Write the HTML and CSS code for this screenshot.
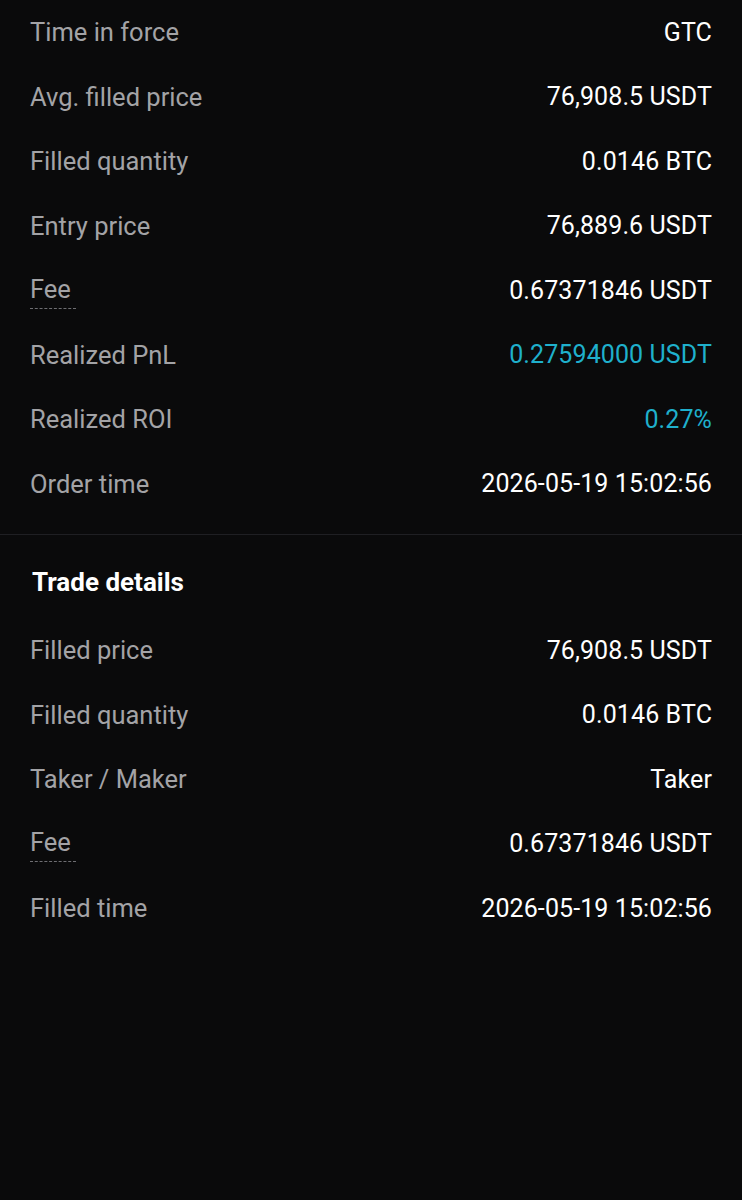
FILE: index.html
```html
<!DOCTYPE html>
<html lang="en">
  <head>
    <meta charset="UTF-8" />
    <meta name="viewport" content="width=device-width, initial-scale=1.0" />
    <title>Order details</title>
    <link rel="stylesheet" href="styles.css">
  </head>
  <body>
    <div class="section">
      <div class="row"><span class="label">Time in force</span><span class="value">GTC</span></div>
      <div class="row"><span class="label">Avg. filled price</span><span class="value">76,908.5 USDT</span></div>
      <div class="row"><span class="label">Filled quantity</span><span class="value">0.0146 BTC</span></div>
      <div class="row"><span class="label">Entry price</span><span class="value">76,889.6 USDT</span></div>
      <div class="row"><span class="label tip">Fee</span><span class="value">0.67371846 USDT</span></div>
      <div class="row"><span class="label">Realized PnL</span><span class="value up">0.27594000 USDT</span></div>
      <div class="row"><span class="label">Realized ROI</span><span class="value up">0.27%</span></div>
      <div class="row"><span class="label">Order time</span><span class="value">2026-05-19 15:02:56</span></div>
    </div>

    <div class="divider"></div>

    <div class="section">
      <h2 class="title">Trade details</h2>
      <div class="row"><span class="label">Filled price</span><span class="value">76,908.5 USDT</span></div>
      <div class="row"><span class="label">Filled quantity</span><span class="value">0.0146 BTC</span></div>
      <div class="row"><span class="label">Taker / Maker</span><span class="value">Taker</span></div>
      <div class="row"><span class="label tip">Fee</span><span class="value">0.67371846 USDT</span></div>
      <div class="row"><span class="label">Filled time</span><span class="value">2026-05-19 15:02:56</span></div>
    </div>
  </body>
</html>
```

FILE: styles.css
```css
body {
  margin: 0;
  padding: 0;
  background-color: #0a0a0b;
  font-family: Roboto, "Liberation Sans", sans-serif;
  color: #fff;
  height: 1200px;
}
.section {
  padding: 0 30px;
}
.row {
  display: flex;
  justify-content: space-between;
  align-items: center;
  height: 64.5px;
}
.label {
  font-size: 25.5px;
  color: #a3a3a6;
}
.label.tip {
  border-bottom: 1px dashed #6e6e72;
  line-height: 28px;
  padding-right: 5px;
  padding-bottom: 5px;
  margin-top: 3px;
}
.value {
  font-size: 25px;
  color: #fff;
  letter-spacing: 0.1px;
}
.value.up {
  color: #1fb0cc;
}
.divider {
  height: 1px;
  background-color: #1f1f23;
  margin-top: 18px;
}
.title {
  margin: 0;
  padding: 10px 2px 0;
  height: 83px;
  box-sizing: border-box;
  display: flex;
  align-items: center;
  font-size: 26px;
  font-weight: 700;
  color: #fff;
}
```
